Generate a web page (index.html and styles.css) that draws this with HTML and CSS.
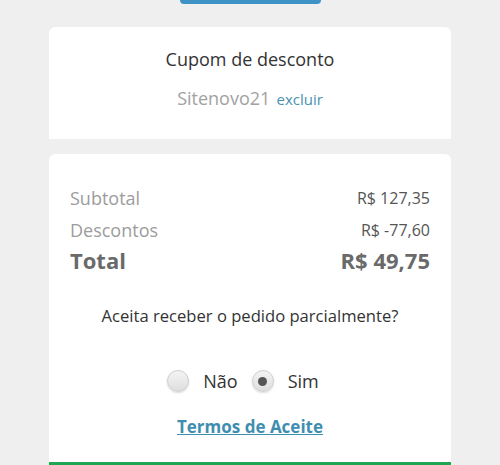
FILE: index.html
```html
<!DOCTYPE html>
<html lang="pt-BR">
<head>
<meta charset="utf-8">
<title>Resumo</title>
<link rel="stylesheet" href="styles.css">
</head>
<body>
<div class="page">
  <div class="top-btn"></div>
  <section class="card coupon">
    <div class="coupon-title">Cupom de desconto</div>
    <div class="coupon-code"><span class="code">Sitenovo21</span> <a class="remove" href="#">excluir</a></div>
  </section>
  <section class="card summary">
    <div class="row"><span class="label">Subtotal</span><span class="value">R$ 127,35</span></div>
    <div class="row"><span class="label">Descontos</span><span class="value">R$ -77,60</span></div>
    <div class="row total"><span class="label">Total</span><span class="value">R$ 49,75</span></div>
    <p class="question">Aceita receber o pedido parcialmente?</p>
    <div class="options">
      <label class="option"><input class="radio" type="radio" name="parcial"><span>Não</span></label>
      <label class="option"><input class="radio" type="radio" name="parcial" checked><span>Sim</span></label>
    </div>
    <div class="terms"><a href="#">Termos de Aceite</a></div>
    <div class="green-bar"></div>
  </section>
</div>
</body>
</html>
```
FILE: styles.css
```css
html, body {
  margin: 0;
  padding: 0;
  background: #efefef;
  font-family: "Open Sans", "Liberation Sans", sans-serif;
  height: 465px;
  overflow: hidden;
}
.page {
  display: flex;
  flex-direction: column;
  align-items: center;
}
.top-btn {
  width: 141px;
  height: 4px;
  background: #3d93c6;
  border-radius: 0 0 4px 4px;
}
.card {
  width: 402px;
  background: #fff;
  border-radius: 6px 6px 0 0;
  box-sizing: border-box;
}
.coupon {
  margin-top: 23px;
  height: 112px;
  padding-top: 20px;
  text-align: center;
}
.coupon-title {
  font-size: 18px;
  line-height: 24px;
  color: #333;
}
.coupon-code {
  margin-top: 15px;
  line-height: 24px;
}
.code {
  font-size: 18px;
  color: #a2a2a2;
}
.remove {
  font-size: 15px;
  color: #4a92ad;
  text-decoration: none;
  margin-left: 2px;
}
.summary {
  margin-top: 15px;
  padding: 28px 21px 0;
  height: 320px;
  display: flex;
  flex-direction: column;
}
.row {
  display: flex;
  justify-content: space-between;
  align-items: center;
  height: 32px;
}
.row.total {
  height: 28px;
  margin-bottom: 4px;
}
.label {
  font-size: 18px;
  color: #9c9c9c;
}
.value {
  font-size: 16px;
  color: #555;
}
.total .label,
.total .value {
  font-size: 22px;
  font-weight: 700;
  color: #6a6a6a;
}
.question {
  margin: 26px 0 0;
  text-align: center;
  font-size: 16.6px;
  line-height: 24px;
  color: #333;
}
.options {
  margin-top: 41px;
  padding-right: 14px;
  display: flex;
  justify-content: center;
  gap: 14px;
  height: 24px;
  align-items: center;
}
.option {
  display: flex;
  align-items: center;
  gap: 14px;
  font-size: 18px;
  color: #333;
}
.radio {
  appearance: none;
  -webkit-appearance: none;
  margin: 0;
  width: 22px;
  height: 22px;
  border-radius: 50%;
  border: 1px solid #cfcfcf;
  background: linear-gradient(#f4f4f4, #dedede);
  box-shadow: 0 1px 2px rgba(0,0,0,0.15);
  box-sizing: border-box;
  position: relative;
}
.radio:checked::after {
  content: "";
  position: absolute;
  left: 50%;
  top: 50%;
  width: 9px;
  height: 9px;
  margin: -4.5px 0 0 -4.5px;
  border-radius: 50%;
  background: #555;
}
.terms {
  margin-top: 22px;
  text-align: center;
  line-height: 24px;
}
.terms a {
  font-size: 17px;
  font-weight: 700;
  color: #3f8eb0;
  text-decoration: underline;
}
.green-bar {
  margin: 23px -21px 0;
  height: 10px;
  background: #1fa653;
}
```
